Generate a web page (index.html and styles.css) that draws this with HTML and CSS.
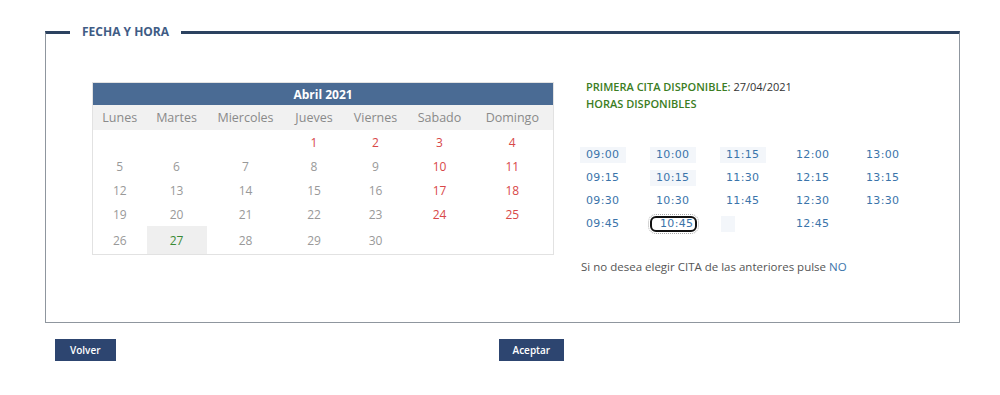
FILE: index.html
```html
<!DOCTYPE html>
<html lang="es">
<head>
<meta charset="utf-8">
<title>Fecha y hora</title>
<link rel="stylesheet" href="styles.css">
</head>
<body>
<div class="page">
  <fieldset class="box">
    <legend class="box-title">FECHA Y HORA</legend>
    <div class="content">
      <table class="cal">
        <colgroup>
          <col class="c1"><col class="c2"><col class="c3"><col class="c4"><col class="c5"><col class="c6"><col class="c7">
        </colgroup>
        <thead>
          <tr><th colspan="7" class="cal-month">Abril 2021</th></tr>
          <tr class="cal-days">
            <th>Lunes</th><th>Martes</th><th>Miercoles</th><th>Jueves</th><th>Viernes</th><th>Sabado</th><th>Domingo</th>
          </tr>
        </thead>
        <tbody>
          <tr><td></td><td></td><td></td><td class="red">1</td><td class="red">2</td><td class="red">3</td><td class="red">4</td></tr>
          <tr><td>5</td><td>6</td><td>7</td><td>8</td><td>9</td><td class="red">10</td><td class="red">11</td></tr>
          <tr><td>12</td><td>13</td><td>14</td><td>15</td><td>16</td><td class="red">17</td><td class="red">18</td></tr>
          <tr><td>19</td><td>20</td><td>21</td><td>22</td><td>23</td><td class="red">24</td><td class="red">25</td></tr>
          <tr class="last"><td>26</td><td class="sel">27</td><td>28</td><td>29</td><td>30</td><td></td><td></td></tr>
        </tbody>
      </table>
      <div class="side">
        <p class="info"><span class="green">PRIMERA CITA DISPONIBLE:</span> <span class="date">27/04/2021</span></p>
        <p class="info green">HORAS DISPONIBLES</p>
        <div class="times">
          <button class="t tint">09:00</button>
          <button class="t tint">10:00</button>
          <button class="t tint">11:15</button>
          <button class="t">12:00</button>
          <button class="t">13:00</button>
          <button class="t">09:15</button>
          <button class="t tint">10:15</button>
          <button class="t">11:30</button>
          <button class="t">12:15</button>
          <button class="t">13:15</button>
          <button class="t">09:30</button>
          <button class="t">10:30</button>
          <button class="t">11:45</button>
          <button class="t">12:30</button>
          <button class="t">13:30</button>
          <button class="t">09:45</button>
          <button class="t focus">10:45</button>
          <button class="t tint empty"></button>
          <button class="t">12:45</button>
          <span></span>
        </div>
        <p class="note">Si no desea elegir CITA de las anteriores pulse <a class="no">NO</a></p>
      </div>
    </div>
  </fieldset>
  <div class="actions">
    <button class="btn">Volver</button>
    <button class="btn">Aceptar</button>
  </div>
</div>
</body>
</html>
```

FILE: styles.css
```css
html, body {
  margin: 0;
  padding: 0;
  background: #fff;
}
body {
  font-family: "Open Sans", "Liberation Sans", sans-serif;
  color: #444;
}
.page {
  padding: 24px 0 0 45px;
  width: 915px;
}
.box {
  margin: 0;
  padding: 0;
  border: 1px solid #8f969e;
  border-top: 3px solid #2c4260;
  min-width: 0;
}
.box-title {
  margin-left: 24px;
  padding: 0 12px;
  font-size: 12px;
  line-height: 16px;
  font-weight: 700;
  color: #3f5c85;
}
.content {
  display: flex;
  align-items: flex-start;
  padding: 42px 0 0 46px;
  height: 240px;
  box-sizing: content-box;
}
.cal {
  border-collapse: collapse;
  width: 461px;
  table-layout: fixed;
  border: 1px solid #e2e2e2;
  font-size: 12px;
  color: #999;
}
.cal th, .cal td {
  padding: 0;
  text-align: center;
  font-weight: 400;
}
.cal-month {
  background: #4a6b94;
  color: #fff;
  height: 22px;
  font-weight: 700 !important;
  font-size: 12px;
}
.cal-days th {
  background: #f1f1f1;
  height: 25px;
  color: #8a8a8a;
  font-size: 12.5px;
}
.c1 { width: 54px; }
.c2 { width: 60px; }
.c3 { width: 78px; }
.c4 { width: 59px; }
.c5 { width: 64px; }
.c6 { width: 64px; }
.c7 { width: 82px; }
.cal td {
  height: 24px;
}
.cal tr.last td {
  height: 28px;
}
.cal td.red { color: #d84848; }
.cal td.sel {
  background: #efefef;
  color: #3a8a35;
  font-weight: 500;
}
.side {
  margin-left: 26px;
  margin-top: -4px;
}
.info {
  margin: 0 0 0 6px;
  font-size: 11px;
  line-height: 17px;
  font-weight: 600;
  color: #333;
}
.info .green, .info.green { color: #3b7d23; }
.info .date { font-weight: 400; color: #333; }
.times {
  display: grid;
  grid-template-columns: repeat(5, 70px);
  grid-auto-rows: 16px;
  row-gap: 7px;
  margin-top: 35px;
  justify-items: start;
}
.t {
  font-family: "DejaVu Sans", Verdana, sans-serif;
  font-size: 11px;
  letter-spacing: 0.3px;
  color: #3b74aa;
  background: #fff;
  border: 0;
  padding: 0 6px;
  height: 16px;
  line-height: 16px;
  width: 46px;
  text-align: left;
  border-radius: 0;
}
.t.tint { background: #f3f6fa; }
.t.empty { width: 14px; margin-left: 1px; }
.t.focus {
  border: 2px solid #111;
  border-radius: 6px;
  outline: 1px dotted #aaa;
  outline-offset: 1px;
  line-height: 12px;
  padding: 0 6px 0 8px;
  width: 47px;
}
.note {
  margin: 27px 0 0 1px;
  font-size: 11.5px;
  color: #555;
}
.no { color: #3b74aa; }
.actions {
  display: flex;
  gap: 383px;
  margin-top: 16px;
  padding-left: 10px;
}
.btn {
  height: 22px;
  background: #2d4570;
  color: #fff;
  border: 0;
  font-family: "Open Sans", "Liberation Sans", sans-serif;
  font-size: 10px;
  font-weight: 600;
  padding: 0 15px;
}
.btn + .btn { padding: 0 14px; }
```
